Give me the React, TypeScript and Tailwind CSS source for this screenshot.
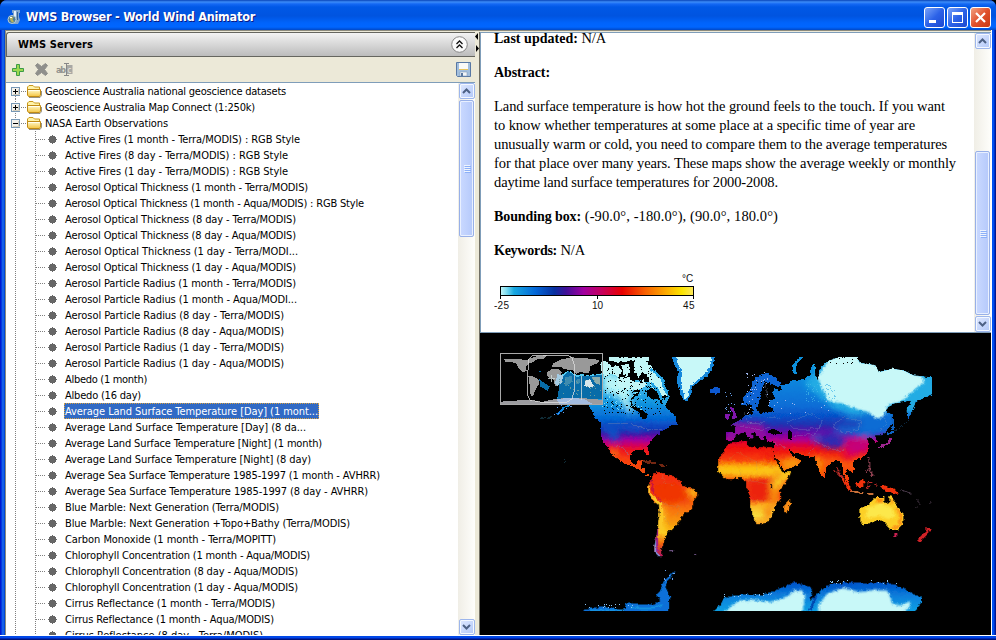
import React, { useLayoutEffect, useRef, useState } from "react";

/* Text set to a known advance width by spreading the difference over its letters. */
function Fit({ text, width, className = "" }: { text: string; width: number; className?: string }) {
  const ref = useRef<HTMLSpanElement>(null);
  const [spacing, setSpacing] = useState(0);
  useLayoutEffect(() => {
    if (ref.current) {
      const natural = ref.current.getBoundingClientRect().width;
      setSpacing((width - natural) / text.length);
    }
  }, [text, width]);
  return (
    <span ref={ref} className={"inline-block whitespace-pre " + className} style={{ letterSpacing: spacing }}>
      {text}
    </span>
  );
}

const servers = [
  { name: "Geoscience Australia national geoscience datasets", width: 241, open: false },
  { name: "Geoscience Australia Map Connect (1:250k)", width: 210, open: false },
  { name: "NASA Earth Observations", width: 123, open: true },
];

const layers: [string, number][] = [
  ["Active Fires (1 month - Terra/MODIS) : RGB Style", 236],
  ["Active Fires (8 day - Terra/MODIS) : RGB Style", 224],
  ["Active Fires (1 day - Terra/MODIS) : RGB Style", 224],
  ["Aerosol Optical Thickness (1 month - Terra/MODIS)", 244],
  ["Aerosol Optical Thickness (1 month - Aqua/MODIS) : RGB Style", 300],
  ["Aerosol Optical Thickness (8 day - Terra/MODIS)", 232],
  ["Aerosol Optical Thickness (8 day - Aqua/MODIS)", 232],
  ["Aerosol Optical Thickness (1 day - Terra/MODI...", 234],
  ["Aerosol Optical Thickness (1 day - Aqua/MODIS)", 232],
  ["Aerosol Particle Radius (1 month - Terra/MODIS)", 232],
  ["Aerosol Particle Radius (1 month - Aqua/MODI...", 233],
  ["Aerosol Particle Radius (8 day - Terra/MODIS)", 220],
  ["Aerosol Particle Radius (8 day - Aqua/MODIS)", 220],
  ["Aerosol Particle Radius (1 day - Terra/MODIS)", 220],
  ["Aerosol Particle Radius (1 day - Aqua/MODIS)", 220],
  ["Albedo (1 month)", 83],
  ["Albedo (16 day)", 77],
  ["Average Land Surface Temperature [Day] (1 mont...", 254],
  ["Average Land Surface Temperature [Day] (8 da...", 242],
  ["Average Land Surface Temperature [Night] (1 month)", 258],
  ["Average Land Surface Temperature [Night] (8 day)", 247],
  ["Average Sea Surface Temperature 1985-1997 (1 month - AVHRR)", 316],
  ["Average Sea Surface Temperature 1985-1997 (8 day - AVHRR)", 304],
  ["Blue Marble: Next Generation (Terra/MODIS)", 215],
  ["Blue Marble: Next Generation +Topo+Bathy (Terra/MODIS)", 286],
  ["Carbon Monoxide (1 month - Terra/MOPITT)", 212],
  ["Chlorophyll Concentration (1 month - Aqua/MODIS)", 246],
  ["Chlorophyll Concentration (8 day - Aqua/MODIS)", 234],
  ["Chlorophyll Concentration (1 day - Aqua/MODIS)", 234],
  ["Cirrus Reflectance (1 month - Terra/MODIS)", 211],
  ["Cirrus Reflectance (1 month - Aqua/MODIS)", 210],
  ["Cirrus Reflectance (8 day - Terra/MODIS)", 199],
];
const selected = 17;

function AppIcon() {
  return (
    <svg width="14" height="16" viewBox="0 0 14 16">
      <path d="M5 1h8v3h-1v4l1 3-2 4H6L4 10l2-3V4H5z" fill="#7fa6cf" />
      <path d="M7 2h2v6H7z" fill="#e4f0fa" />
      <path d="M10 3h1v8h-1z" fill="#38648f" />
      <circle cx="5" cy="10.500" r="4" fill="#4d7c94" stroke="#b9cdd6" />
      <path d="M2.500 9l2-1.500 2 1-1 2 1.500 2-2 1-1.500-2z" fill="#b7b35a" />
      <path d="M3 8h2v1H3z" fill="#fff" />
    </svg>
  );
}

function Folder() {
  return (
    <svg width="16" height="14" viewBox="0 0 16 14">
      <defs>
        <linearGradient id="folder" x1="0" y1="0" x2="0" y2="1">
          <stop offset="0" stopColor="#fffbd0" />
          <stop offset="1" stopColor="#f4c440" />
        </linearGradient>
      </defs>
      <path d="M1.500 11V3l1.500-1.500h4l1.500 1.500H13.500V6" fill="#fff3a8" stroke="#c9981c" />
      <path d="M1.500 5.500h13V11l-1 1.500H2.500L1.500 11z" fill="url(#folder)" stroke="#c08a14" />
      <path d="M2.500 6.500h11" stroke="#fffef0" />
      <path d="M3 13.500h11l1.500-2V7" stroke="#6b6450" fill="none" opacity=".7" />
    </svg>
  );
}

function Expander({ open, first }: { open: boolean; first: boolean }) {
  return (
    <svg width="19" height="16" viewBox="0 0 19 16" shapeRendering="crispEdges">
      <path d={first ? "M8.500 13v3" : "M8.500 0v16"} stroke="#808080" strokeDasharray="1 1" />
      <path d="M14 8.500h5" stroke="#808080" strokeDasharray="1 1" />
      <rect x="4.500" y="4.500" width="8" height="8" fill="#f4f2ec" stroke="#7898b5" />
      <path d="M6 11.500h6.500M11.500 6v6" stroke="#d4cebe" />
      <path d={open ? "M6 8.500h5" : "M6 8.500h5M8.500 6v5"} stroke="#000" />
    </svg>
  );
}

function Branch() {
  return (
    <svg width="57" height="16" viewBox="0 0 57 16" shapeRendering="crispEdges">
      <path d="M8.500 0v16M28.500 0v16M29 8.500h9" stroke="#808080" strokeDasharray="1 1" />
      <path d="M43 5h5v1h1v5h-1v1h-5v-1h-1V6h1z" fill="#666" />
      <path d="M45 4h1v9h-1zM41 8h9v1h-9z" fill="#666" />
    </svg>
  );
}

function ArrowButton({ down = false }: { down?: boolean }) {
  return (
    <div className="flex h-4 w-4 shrink-0 items-center justify-center rounded-[2px] border border-[#9db6ec] bg-linear-to-br from-[#dfe8ff] to-[#b2c8f8] shadow-[inset_0_0_0_1px_#f4f8ff]">
      <svg width="9" height="6" viewBox="0 0 9 6">
        <path d={down ? "M1 1l3.500 3.500L8 1" : "M1 5l3.500-3.500L8 5"} fill="none" stroke="#4d6185" strokeWidth="2" />
      </svg>
    </div>
  );
}

function Thumb({ className }: { className: string }) {
  return (
    <div
      className={
        "flex w-[15px] shrink-0 flex-col items-center justify-center rounded-[2px] border border-[#98b0e8] bg-linear-to-r from-[#cad9ff] to-[#b5c9fb] shadow-[inset_0_0_0_1px_#e9f0ff] " +
        className
      }
    >
      <div className="flex flex-col gap-px">
        {[0, 1, 2, 3].map((i) => (
          <div key={i} className="h-px w-1.5 bg-[#eef4fe] shadow-[1px_1px_0_#8cb0f8]" />
        ))}
      </div>
    </div>
  );
}

function CaptionButton({ kind }: { kind: "min" | "max" | "close" }) {
  return (
    <div
      className={
        "h-[21px] w-[21px] rounded-[3px] border border-white bg-linear-to-br " +
        (kind === "close" ? "from-[#f0a080] via-[#e0502c] to-[#c83810]" : "from-[#7ba2f8] via-[#2c62e8] to-[#1c48d0]")
      }
    >
      <svg width="19" height="19" viewBox="0 0 19 19">
        {kind === "min" && <path d="M4 12h7v3H4z" fill="#fff" />}
        {kind === "max" && <path d="M4 4h11v11H4zM5 7v7h9V7z" fill="#fff" fillRule="evenodd" />}
        {kind === "close" && <path d="M5 5l9 9M14 5l-9 9" stroke="#fff" strokeWidth="2.200" />}
      </svg>
    </div>
  );
}

/* Repeatable scatter of single pixels over a box. */
function scatter(seed: number, count: number, x: number, y: number, w: number, h: number) {
  let s = seed;
  const next = () => (s = (s * 16807) % 2147483647) / 2147483647;
  let d = "";
  for (let i = 0; i < count; i++) {
    d += `M${Math.floor(x + next() * w)} ${Math.floor(y + next() * h)}h1v1h-1z`;
  }
  return d;
}

function Stops({ list }: { list: [number, string][] }) {
  return (
    <>
      {list.map(([o, c]) => (
        <stop key={o} offset={o} stopColor={c} />
      ))}
    </>
  );
}

const NORTH_AMERICA =
  "M232 175L245 135 248 100 262 92 285 102 330 105 368 98 400 100 420 118 445 125 470 118 500 125 515 105 528 112 515 140 500 150 500 165 520 178 515 195 525 215 512 232 500 220 480 205 458 195 452 180 470 165 480 150 465 150 452 172 450 200 475 215 490 235 500 232 505 210 520 180 530 170 545 190 560 200 570 215 585 225 592 255 575 252 560 262 540 275 520 290 507 310 502 322 506 343 498 345 490 328 460 330 448 345 448 362 463 372 476 360 487 363 480 380 493 385 494 400 512 403 500 410 485 395 465 380 440 373 415 358 397 335 410 355 395 345 380 318 368 305 361 285 362 250 345 232 330 202 315 182 290 176 265 195 235 220 222 224 250 200 268 183z";
const EURASIA =
  "M78 300L78 275 105 275 103 258 93 252 115 240 135 225 160 225 155 212 168 205 175 217 215 215 220 205 205 200 205 180 225 175 215 155 225 145 245 150 240 135 265 130 275 118 300 120 330 105 335 75 345 70 343 100 352 120 358 85 380 63 410 52 410 44 470 44 478 68 500 70 525 75 535 95 575 85 610 90 640 105 690 110 700 112 700 160 665 175 645 185 635 215 622 235 618 210 632 180 605 185 575 190 553 212 575 222 575 245 560 270 540 285 524 285 530 305 520 310 516 292 498 290 505 310 500 340 480 355 462 360 455 370 463 385 455 400 440 385 435 395 448 415 440 425 428 400 425 370 412 358 395 365 378 380 373 412 362 405 350 370 342 350 325 348 300 342 275 335 265 325 272 345 302 360 295 372 250 390 240 375 220 340 218 325 225 307 200 303 195 285 188 290 192 303 175 290 160 277 150 275 160 290 150 300 135 275 125 277 105 285 98 300 85 303z";
const AFRICA =
  "M440-15L455-25 500-28 502-12 535-8 550-12 577-8 582 20 605 66 632 65 622 85 598 118 598 150 582 165 580 180 568 205 548 220 528 220 515 190 508 165 508 135 498 112 497 92 480 82 440 87 420 72 412 60 412 30z";
const SOUTH_AMERICA =
  "M218 70L235 64 262 72 285 80 300 95 305 107 330 112 350 122 350 135 338 155 335 175 310 190 300 210 285 225 276 237 262 245 252 265 248 285 240 300 245 318 235 318 222 305 222 285 228 260 232 225 238 185 235 165 218 150 203 125 205 100 212 90z";
const EAST_ANTARCTICA =
  "M390 488L415 470 430 445 460 435 500 432 545 433 580 422 620 405 640 395 660 400 692 410 695 425 690 450 712 430 740 405 780 398 820 395 860 400 900 395 940 402 980 420 1005 432 1025 445 1020 460 1000 488z";
const AUSTRALIA =
  "M240 178L262 168 280 152 292 143 312 142 310 157 328 165 330 140 338 145 345 165 367 190 367 215 355 237 330 237 318 215 295 208 270 218 248 222 240 200z";

function TemperatureMap() {
  return (
    <svg width="511" height="302" viewBox="480 333 511 302" className="block bg-black" shapeRendering="crispEdges">
      <defs>
        <filter id="coast" x="-5%" y="-5%" width="110%" height="110%">
          <feTurbulence type="fractalNoise" baseFrequency=".3" numOctaves="2" seed="4" result="n" />
          <feDisplacementMap in="SourceGraphic" in2="n" scale="3.600" xChannelSelector="R" yChannelSelector="G" />
        </filter>
        <filter id="soft" x="-30%" y="-30%" width="160%" height="160%">
          <feGaussianBlur stdDeviation="9" />
        </filter>
        <filter id="haze" x="-30%" y="-30%" width="160%" height="160%">
          <feGaussianBlur stdDeviation="3.500" />
        </filter>
        <linearGradient id="na" gradientUnits="userSpaceOnUse" x1="0" y1="90" x2="0" y2="405">
          <Stops list={[[0, "#5cd0f0"], [0.2, "#30aee8"], [0.32, "#1092de"], [0.46, "#0468d4"], [0.56, "#1038b8"], [0.61, "#5010a4"], [0.66, "#a000a0"], [0.71, "#d00060"], [0.76, "#ee1420"], [0.85, "#f84010"], [1, "#f05010"]]} />
        </linearGradient>
        <linearGradient id="ea" gradientUnits="userSpaceOnUse" x1="0" y1="50" x2="0" y2="420">
          <Stops list={[[0, "#20b0e8"], [0.2, "#0a84dc"], [0.4, "#086cd6"], [0.48, "#0650c8"], [0.55, "#2430b0"], [0.61, "#6808a8"], [0.67, "#b00090"], [0.71, "#d80048"], [0.76, "#f01410"], [0.85, "#f85a08"], [1, "#f83c08"]]} />
        </linearGradient>
        <linearGradient id="af" gradientUnits="userSpaceOnUse" x1="0" y1="-28" x2="0" y2="220">
          <Stops list={[[0, "#e00030"], [0.08, "#f01010"], [0.22, "#f83c08"], [0.29, "#fa8008"], [0.34, "#fcb814"], [0.38, "#fcb814"], [0.43, "#f88a10"], [0.48, "#f03810"], [0.7, "#f03010"], [0.76, "#fcb020"], [0.9, "#f8e040"], [1, "#f8a020"]]} />
        </linearGradient>
        <linearGradient id="sa" gradientUnits="userSpaceOnUse" x1="0" y1="64" x2="0" y2="318">
          <Stops list={[[0, "#f42c10"], [0.3, "#f03808"], [0.42, "#f86c08"], [0.6, "#f89808"], [0.72, "#fcc018"], [0.85, "#f06010"], [1, "#b01060"]]} />
        </linearGradient>
        <linearGradient id="an" gradientUnits="userSpaceOnUse" x1="0" y1="395" x2="0" y2="482">
          <Stops list={[[0, "#0450c8"], [0.5, "#0880dc"], [1, "#10a0e4"]]} />
        </linearGradient>
        <clipPath id="naClip"><path d={NORTH_AMERICA} /></clipPath>
        <clipPath id="eaClip"><path d={EURASIA} /></clipPath>
        <clipPath id="afClip"><path d={AFRICA} /></clipPath>
        <clipPath id="saClip"><path d={SOUTH_AMERICA} /></clipPath>
        <clipPath id="auClip"><path d={AUSTRALIA} /></clipPath>
        <clipPath id="anClip"><path d={EAST_ANTARCTICA} /></clipPath>
        <clipPath id="extent"><rect x="480" y="357" width="452" height="254" /></clipPath>
      </defs>
      <g clipPath="url(#extent)">
        <g filter="url(#coast)">
          {/* North America and Greenland */}
          <g transform="translate(480.500 340.500) scale(.33333)">
            <path d={NORTH_AMERICA} fill="url(#na)" />
            <g clipPath="url(#naClip)">
              <g filter="url(#soft)">
                <path d="M370 95L430 120 455 150 440 200 405 165 370 150z" fill="#b8f4f6" />
                <path d="M365 250L410 250 420 290 405 305 385 290z" fill="#0c50c4" />
                <path d="M420 250L500 245 480 275 440 270z" fill="#1848c4" />
                <ellipse cx="400" cy="340" rx="14" ry="18" fill="#fa7010" />
                <path d="M430 190L450 185 460 215 435 210z" fill="#b8f0f6" />
              </g>
            </g>
            <path d="M362 60L385 65 392 80 412 75 425 92 410 110 395 95 380 108 362 95zM385 50L505 50 505 62 480 66 450 60 420 66 385 60zM425 75L445 70 450 92 440 110 428 100zM460 65L500 66 520 85 520 100 545 120 550 150 565 168 545 165 530 145 510 140 505 110 485 95 475 110 462 95zM410 115L440 112 470 125 490 118 498 135 475 148 440 150 415 140z" fill="#c2f6f6" />
            <path d="M510 85L545 115 550 140 565 168 552 190 540 168 530 145 512 130" fill="none" stroke="#28a4e4" strokeWidth="8" />
            <path d="M575 44L706 44 698 80 682 105 660 122 635 138 628 168 620 184 604 172 594 140 588 118 594 96 580 70z" fill="#1488dc" />
            <path d="M586 44L692 44 688 80 672 102 650 120 629 135 623 168 616 178 605 145 602 112 606 95 592 70z" fill="#c8f8f8" />
            <path d="M690 148L702 139 720 143 720 155 705 161 690 155z" fill="#0c58d0" />
            <path d="M478 360L505 358 530 368 515 372 490 366zM535 370L560 376 545 382z" fill="#c04020" opacity=".6" />
            <path d="M180 234L215 229M245 358L258 366" stroke="#24607a" strokeWidth="2" opacity=".7" />
            <path d="M380 248H450M452 250L485 262 510 268 545 265M395 318L425 320 447 345" stroke="#7c86b0" strokeWidth="2" fill="none" opacity=".6" />
          </g>
          {/* Europe and Asia */}
          <g transform="translate(700.500 340.500) scale(.33333)">
            <path d={EURASIA} fill="url(#ea)" />
            <g clipPath="url(#eaClip)">
              <g filter="url(#soft)">
                <path d="M310 130L400 40 540 60 700 95 720 190 560 240 490 235 400 205z" fill="#22ace4" />
                <path d="M440 225L580 205 590 270 510 290 400 275z" fill="#0a6cd4" />
                <path d="M340 290L390 275 440 297 420 325 370 318z" fill="#2c2cb4" />
                <ellipse cx="345" cy="292" rx="12" ry="8" fill="#2868d0" />
                <path d="M430 310L500 290 510 330 450 345z" fill="#c4007c" />
                <path d="M240 365L300 345 300 380 250 395zM340 350L360 350 365 405 350 390z" fill="#f89810" />
                <path d="M470 345L445 360 420 350 430 330z" fill="#e40038" />
                <path d="M90 245L190 250 200 300 80 300z" fill="#9008a0" />
                <path d="M395 240L480 240 480 262 410 262z" fill="#1c3cb8" />
              </g>
              <path
                d="M350 110L375 75 395 40 470 40 540 60 600 80 635 100 665 108 672 125 640 150 600 185 565 192 548 230 530 235 505 215 465 205 430 190 385 182 368 150z"
                fill="#c8f8f8"
                filter="url(#haze)"
              />
            </g>
            <path d="M125 195L128 170 150 148 157 122 178 105 200 96 225 112 243 128 235 140 212 130 195 125 185 140 180 170 170 200 158 212 150 190z" fill="#0864d4" />
            <path d="M285 100L280 75 292 60 308 44M335 100L338 75" stroke="#1090dc" strokeWidth="9" fill="none" />
            <path d="M88 198L98 200 110 232 92 238 98 220zM75 222L85 218 85 235 75 235z" fill="#8018ac" />
            <path d="M530 322L548 312 563 306 568 290 574 296 567 312 542 322z" fill="#a02890" />
            <path d="M576 222L578 268M560 282L580 274" stroke="#0c64c4" strokeWidth="5" />
            <path d="M580 272L600 262 625 240" stroke="#173e60" strokeWidth="2" fill="none" />
            <path d="M260 242L290 235 330 220 365 240 355 262 310 268 275 262zM400 250L430 232 480 240 475 268 430 278 402 264zM135 235L150 250 180 250 200 232 240 230M120 258L150 262 185 270 205 260M280 285L340 282 360 262M340 300L400 328 430 330M222 305L260 325M545 225L560 250 540 270M320 345L345 318M150 150L180 115 195 130 200 170M130 215L155 235" stroke="#8ba0c4" strokeWidth="1.500" fill="none" opacity=".5" />
            <path d="M202 268L222 266 245 280 222 282 202 277zM262 270L272 275 275 300 262 295z" fill="#000" />
          </g>
          {/* Africa, South America and Antarctica */}
          <g transform="translate(580.500 450.500) scale(.33333)">
            <path d={AFRICA} fill="url(#af)" />
            <g clipPath="url(#afClip)">
              <g filter="url(#soft)">
                <path d="M415 44L600 50 590 68 415 66z" fill="#fcc818" />
                <path d="M595 60L640 60 600 115 570 110 580 80z" fill="#fcd020" />
                <path d="M505 90L565 85 570 140 510 150z" fill="#ec2408" />
                <path d="M570 110L600 110 595 165 565 165z" fill="#f88c10" />
                <ellipse cx="592" cy="75" rx="9" ry="8" fill="#f04408" />
                <path d="M550 -20L580 -15 590 20 560 30z" fill="#f01c10" />
                <path d="M550 170L585 170 565 215 550 200z" fill="#f88810" />
              </g>
            </g>
            <path d="M568 105h7v7h-7z" fill="#181008" />
            <path d="M628 145L631 160 619 187 610 185 611 165z" fill="#f88c18" />
            <path d={SOUTH_AMERICA} fill="url(#sa)" />
            <g clipPath="url(#saClip)">
              <g filter="url(#soft)">
                <path d="M315 105L360 115 340 155 330 140z" fill="#fcc018" />
                <path d="M240 165L252 170 250 260 236 250z" fill="#fce030" />
                <path d="M220 105L285 95 310 130 270 160 230 145z" fill="#f03404" />
              </g>
              <path d="M203 100L208 108 209 125 232 150 245 160 250 200 242 245 232 240 236 180 232 165 203 130z" fill="#fcc828" />
              <path d="M212 90L220 130 245 155" stroke="#c81440" strokeWidth="4" fill="none" />
              <path d="M230 232L228 305" stroke="#a02088" strokeWidth="9" />
              <path d="M223 262L222 305 240 320" stroke="#8498e4" strokeWidth="7" fill="none" />
            </g>
            <path d="M266 301h12M340 313h6" stroke="#806098" strokeWidth="4" />
            <path d="M245 75L255 100 280 102M235 150L265 165 300 170 285 200M250 200L270 225" stroke="#b88868" strokeWidth="1.500" fill="none" opacity=".6" />
            <path d="M445 30L470 5 540 40M480 55V78M530 30V60M500 90L560 100M515 150L560 150M560 30L585 60" stroke="#b89060" strokeWidth="1.500" fill="none" opacity=".5" />
            <path d="M5 488L10 478 30 475 60 468 100 473 130 480 140 455 180 462 215 462 240 450 225 435 240 420 245 400 270 370 288 360 262 390 255 410 268 440 265 470 262 488z" fill="#0870d8" />
            <path d="M30 480H130M150 470L200 475 245 465" stroke="#1490e0" strokeWidth="6" fill="none" />
            <path d={EAST_ANTARCTICA} fill="url(#an)" />
            <g clipPath="url(#anClip)">
              <path
                d="M425 492L450 468 475 450 520 448 570 455 620 438 640 420 665 420 674 436 665 492zM716 492L712 465 740 430 785 412 840 425 880 418 920 420 930 440 935 460 960 465 990 452 990 465 965 492z"
                fill="#c8f8f8"
                filter="url(#haze)"
              />
              <path d="M690 440L705 440 690 480" stroke="#0448b0" strokeWidth="8" fill="none" />
            </g>
          </g>
          {/* South-east Asia and Oceania */}
          <g transform="translate(780 450) scale(.33333)">
            <path d={AUSTRALIA} fill="#fcd028" stroke="#fcd028" strokeWidth="4" />
            <g clipPath="url(#auClip)" filter="url(#haze)">
              <path d="M258 175L300 160 335 172 345 200 325 208 300 198 260 205z" fill="#fce84c" />
              <path d="M350 175L364 195 364 218 352 233 335 235" fill="none" stroke="#fc8c18" strokeWidth="9" />
              <path d="M292 142L312 142 308 158 288 158zM330 144L340 150 337 168z" fill="#fc9010" />
            </g>
            <path d="M342 248L353 248 350 260 344 260z" fill="#c82050" />
            <path d="M433 225L441 235 452 236 444 250 418 277 412 270 432 250 440 243z" fill="#d02028" />
            <path d="M180 82L192 85 212 110 210 124 195 105zM225 95L238 95 248 82 254 90 250 112 230 112zM295 104L308 105 325 110 345 118 358 137 340 128 318 126 306 115z" fill="#f03010" />
            <path d="M212 123L250 130 280 132" stroke="#c87038" strokeWidth="5" fill="none" />
            <path d="M262 118L264 98 278 98M264 105L272 112M285 98L292 110M170 50L180 75 190 82M165 60L185 85" stroke="#b82c28" strokeWidth="4" fill="none" />
            <path d="M265 20L270 45 258 70M268 50L278 78 272 60" stroke="#8c4050" strokeWidth="4" fill="none" />
            <path d="M365 120L395 130M410 148L420 165M405 175L412 172M448 162L455 155" stroke="#403040" strokeWidth="3" />
          </g>
        </g>
        {/* stippled ice, lakes and islets */}
        <path d={scatter(71, 90, 592, 366, 60, 30) + scatter(13, 65, 604, 388, 42, 26) + scatter(905, 25, 648, 385, 15, 30)} fill="#000" />
        <path d={scatter(37, 60, 602, 385, 40, 25)} fill="#80e0f4" />
        <path d={scatter(8, 30, 746, 372, 24, 36) + scatter(55, 18, 742, 400, 90, 14)} fill="#a0b8f0" />
        <path d={scatter(99, 25, 744, 375, 26, 38) + scatter(43, 18, 830, 357, 45, 8)} fill="#000" />
        <path d={scatter(312, 60, 806, 384, 30, 18)} fill="#44b8e8" opacity=".7" />
        <path d={scatter(77, 12, 725, 390, 10, 22) + scatter(31, 14, 553, 403, 20, 12) + scatter(88, 9, 664, 570, 12, 14)} fill="#68a0ec" />
        <path d={scatter(61, 16, 585, 604, 50, 4) + scatter(52, 14, 724, 593, 50, 4) + scatter(34, 16, 830, 580, 70, 4)} fill="#88c4f4" />
      </g>
      {/* overview inset */}
      <g transform="translate(480 340) scale(.33333)">
        <path d="M232 178L240 120 265 94 290 110 366 105 366 178z" fill="#086ca8" />
        <path d="M178 118L210 140 203 152 180 140zM178 92h6v5h-6z" fill="#086ca8" />
        <path d="M72 57L105 56 140 60 165 50 205 44 190 58 172 58 160 65 145 72 137 82 140 92 130 97 118 88 108 70 92 65 75 65z" fill="#999" />
        <path d="M145 108L155 107 178 120 178 130 168 145 160 165 152 170 150 140z" fill="#999" />
        <path d="M200 98L215 88 235 88 245 97 240 115 235 135 225 138 220 118 203 110z" fill="#999" />
        <path d="M215 82L220 70 245 58 275 52 320 55 358 60 355 68 330 80 328 97 315 100 300 95 288 102 278 90 255 88 240 80z" fill="#999" />
        <path d="M315 122L330 118 342 138 330 143 313 138z" fill="#d8e8ec" />
        <path d="M335 110L360 112 360 135 345 130z" fill="#8cacac" />
        <path d="M255 112L275 108 278 125 255 140zM290 118L300 118 298 132 286 130z" fill="#4a94b0" opacity=".8" />
        <path d="M232 103L250 105 245 128 232 138 225 130z" fill="#a4cce4" />
        <path d="M62 185L100 182 145 180 185 186 230 176 290 174 330 176 367 180 367 193 62 193z" fill="#9c9ca0" />
        <path d="M230 178L260 174 310 176 340 193 240 193z" fill="#a4bce0" />
      </g>
      <path d={scatter(222, 30, 559, 378, 42, 18)} fill="#6a9c9c" />
      <rect x="500.500" y="353.500" width="102" height="51" fill="none" stroke="#a8a8a8" />
      <path d="M533 355H568L572 358 574 364V392L572 399 567 402 540 402 530 400 527 394 527 380 528 370 528 360z" fill="none" stroke="#e0e0e0" opacity=".75" />
      <path d="M548 378.500h7M551.500 375v7M581.500 376v24" stroke="#d0dcdc" opacity=".8" />
    </svg>
  );
}

function Legend() {
  return (
    <svg width="212" height="44" viewBox="494 269 212 44" className="mt-[9px] block">
      <defs>
        <linearGradient id="scale">
          <Stops list={[[0, "#c8f8f8"], [0.03, "#80dcf0"], [0.07, "#18a8e0"], [0.18, "#0468d8"], [0.28, "#0830a0"], [0.34, "#401098"], [0.43, "#a000a0"], [0.53, "#c80058"], [0.63, "#e80000"], [0.75, "#f86000"], [0.86, "#fcac00"], [0.94, "#fce400"], [1, "#fce860"]]} />
        </linearGradient>
      </defs>
      <rect x="500.500" y="286.500" width="193" height="9" fill="url(#scale)" stroke="#000" shapeRendering="crispEdges" />
      <path d="M500.500 295v4M597.500 295v4M693.500 295v4" stroke="#000" shapeRendering="crispEdges" />
      <g className="font-['Liberation_Sans',sans-serif] text-[10px]" fill="#111">
        <text x="682" y="282">°</text>
        <text x="686" y="282">C</text>
        <text x="494" y="309" textLength="15">-25</text>
        <text x="592" y="309" textLength="11">10</text>
        <text x="683" y="309" textLength="11.500">45</text>
      </g>
    </svg>
  );
}

export default function App() {
  return (
    <div className="flex h-[640px] w-[996px] flex-col overflow-hidden bg-black">
      <div className="flex min-h-0 flex-1 flex-col overflow-hidden rounded-t-[7px] bg-[#0831d9]">
        <header className="flex h-[30px] shrink-0 items-center bg-[linear-gradient(#0844b8_0px,#3c8cf8_2px,#1468f4_4px,#0058e6_7px,#0054e0_16px,#0064fc_23px,#0066ff_27px,#0048c8_30px)] pt-1 pr-[5px] pl-[7px]">
          <AppIcon />
          <Fit
            text="WMS Browser - World Wind Animator"
            width={229}
            className="ml-[5px] font-['DejaVu_Sans_Condensed','DejaVu_Sans',sans-serif] text-[12.500px] leading-4 font-bold text-white [text-shadow:1px_1px_0_#0a1883]"
          />
          <div className="ml-auto flex gap-0.5">
            <CaptionButton kind="min" />
            <CaptionButton kind="max" />
            <CaptionButton kind="close" />
          </div>
        </header>
        <main className="flex min-h-0 flex-1">
          <div className="w-[5px] shrink-0 bg-[linear-gradient(90deg,#0019cf_0_1px,#0638e0_1px_2px,#1660e8_2px_4px,#0048d8_4px)]" />
          <div className="flex min-h-0 min-w-0 flex-1 border-t border-l border-[#8c8a7c] bg-[#ece9d8] pt-px">
            <section className="flex w-[469px] shrink-0 flex-col">
              <div className="flex h-[25px] shrink-0 items-center rounded-tl-[3px] border-y border-l border-[#66665f] bg-linear-to-b from-[#f3f3f3] to-[#bcbcbc] pr-[7px] pl-[11px]">
                <Fit
                  text="WMS Servers"
                  width={75}
                  className="font-['DejaVu_Sans_Condensed','DejaVu_Sans',sans-serif] text-[11px] leading-4 font-bold text-black"
                />
                <svg className="ml-auto" width="17" height="17" viewBox="0 0 17 17">
                  <circle cx="8.500" cy="8.500" r="7.800" fill="#fafafa" stroke="#888" />
                  <path d="M5.500 8l3-3 3 3M5.500 12l3-3 3 3" fill="none" stroke="#111" strokeWidth="1.300" />
                </svg>
              </div>
              <div className="flex h-[25px] shrink-0 items-center pr-1 pl-1.5">
                <svg width="12" height="12" viewBox="0 0 12 12">
                  <path d="M4.500.5h3v4h4v3h-4v4h-3v-4h-4v-3h4z" fill="#9cd850" stroke="#3c9c48" />
                </svg>
                <svg className="ml-[11px]" width="13" height="13" viewBox="0 0 13 13">
                  <path d="M.5 2.500l2-2 4 3 4-3 2 2-3 4 3 4-2 2-4-3-4 3-2-2 3-4z" fill="#8f8f8b" stroke="#8f8f8b" />
                </svg>
                <svg className="ml-[8px]" width="17" height="13" viewBox="0 0 17 13">
                  <rect x="10.500" y="2" width="6" height="9" fill="#a8a8a4" />
                  <text x="0" y="10" textLength="10" className="font-['DejaVu_Sans_Condensed',sans-serif] text-[9px] font-bold" fill="#92928e">ab</text>
                  <text x="11.500" y="10" className="font-['DejaVu_Sans_Condensed',sans-serif] text-[8px]" fill="#e8e6dc">c</text>
                  <path d="M8 .5h5M10.500 1v11M8 12.500h5" stroke="#888" />
                </svg>
                <svg className="ml-auto" width="15" height="15" viewBox="0 0 15 15">
                  <path d="M.5.5h14v14h-13l-1-1z" fill="#a2bedd" stroke="#5878a4" />
                  <path d="M3 1h9v7H3z" fill="#fafaf8" />
                  <path d="M3 7h9v1H3z" fill="#e8c45c" />
                  <path d="M4 10h7v4H4z" fill="#f0f4f8" stroke="#7890b0" strokeWidth=".5" />
                  <path d="M5 11h2v3H5z" fill="#5878a0" />
                </svg>
              </div>
              <div className="flex min-h-0 flex-1 border-t border-[#7f9db9] bg-white">
                <div className="min-w-0 flex-1 overflow-hidden pl-px font-['DejaVu_Sans_Condensed','DejaVu_Sans',sans-serif] text-[11px] text-black">
                  {servers.map((s, i) => (
                    <div key={s.name} className="flex h-4 items-center">
                      <Expander open={s.open} first={i === 0} />
                      <Folder />
                      <Fit text={s.name} width={s.width} className="ml-[3px] self-start leading-[18px]" />
                    </div>
                  ))}
                  {layers.map(([name, width], i) => (
                    <div key={name} className="flex h-4 items-center">
                      <Branch />
                      <div
                        className={
                          i === selected
                            ? "flex h-4 items-start bg-[#316ac5] pr-px leading-[18px] text-white outline-1 -outline-offset-1 outline-dotted outline-[#d8a040]"
                            : "flex h-4 items-start leading-[18px]"
                        }
                      >
                        <Fit text={name} width={width} className="pl-px" />
                      </div>
                    </div>
                  ))}
                </div>
                <div className="flex w-[17px] shrink-0 flex-col items-center bg-linear-to-r from-[#f0eee6] to-[#fefefb]">
                  <ArrowButton />
                  <Thumb className="mt-px h-[137px]" />
                  <div className="flex-1" />
                  <ArrowButton down />
                </div>
              </div>
            </section>
            <div className="flex w-[5px] shrink-0 flex-col items-center border-r border-[#716f64]">
              <svg width="4" height="20" viewBox="0 0 4 20" className="mt-px">
                <path d="M3 0v7L0 3.500zM1 12v7l3-3.500z" fill="#000" />
              </svg>
            </div>
            <section className="flex min-w-0 flex-1 flex-col">
              <div className="flex h-[301px] shrink-0 overflow-hidden border-y border-l border-[#7f9db9] bg-white">
                <div className="-mt-[4px] flex min-w-0 flex-1 flex-col gap-[15px] pl-[13px] font-['Liberation_Serif',serif] text-[14.500px] leading-[19px] text-black">
                  <p className="h-[19px] whitespace-pre"><Fit text="Last updated:" width={84} className="text-[14px] font-bold" /><Fit text=" N/A" width={28} /></p>
                  <p className="h-[19px]"><Fit text="Abstract:" width={56} className="text-[14px] font-bold" /></p>
                  <div className="flex flex-col items-start">
                    <Fit text="Land surface temperature is how hot the ground feels to the touch. If you want" width={451} className="h-[19px]" />
                    <Fit text="to know whether temperatures at some place at a specific time of year are" width={421} className="h-[19px]" />
                    <Fit text="unusually warm or cold, you need to compare them to the average temperatures" width={453} className="h-[19px]" />
                    <Fit text="for that place over many years. These maps show the average weekly or monthly" width={462} className="h-[19px]" />
                    <Fit text="daytime land surface temperatures for 2000-2008." width={284} className="h-[19px]" />
                  </div>
                  <p className="h-[19px] whitespace-pre"><Fit text="Bounding box:" width={87} className="text-[14px] font-bold" /><Fit text=" (-90.0°, -180.0°), (90.0°, 180.0°)" width={197} /></p>
                  <div>
                    <p className="h-[19px] whitespace-pre"><Fit text="Keywords:" width={63} className="text-[14px] font-bold" /><Fit text=" N/A" width={28} /></p>
                    <Legend />
                  </div>
                </div>
                <div className="flex w-[17px] shrink-0 flex-col items-center bg-linear-to-r from-[#f0eee6] to-[#fefefb]">
                  <ArrowButton />
                  <Thumb className="mt-[102px] h-[164px]" />
                  <div className="flex-1" />
                  <ArrowButton down />
                </div>
              </div>
              <TemperatureMap />
            </section>
          </div>
          <div className="w-[5px] shrink-0 bg-[linear-gradient(90deg,#ffffff_0_1px,#0050f0_1px_3px,#0030c8_3px_4px,#001890_4px)]" />
        </main>
        <div className="h-[5px] shrink-0 bg-[linear-gradient(#ffffff_0_1px,#0048e8_1px_3px,#0028b8_3px_4px,#001478_4px)]" />
      </div>
    </div>
  );
}
